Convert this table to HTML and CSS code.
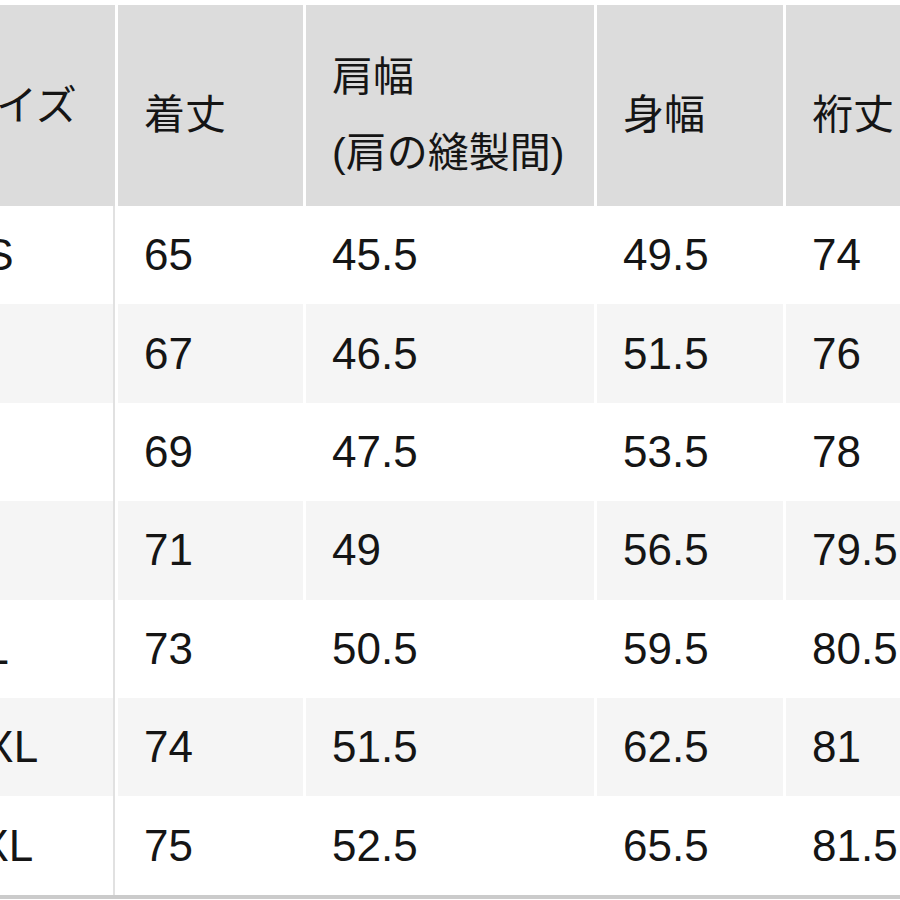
FILE: index.html
```html
<!DOCTYPE html>
<html lang="ja">
<head>
<meta charset="utf-8">
<title>サイズ表</title>
<link rel="stylesheet" href="styles.css">
</head>
<body>
<div class="table">
  <div class="row head">
    <div class="cell first"><span>サイズ</span></div>
    <div class="cell"><span>着丈</span></div>
    <div class="cell"><span>肩幅</span><span>(肩の縫製間)</span></div>
    <div class="cell"><span>身幅</span></div>
    <div class="cell"><span>裄丈</span></div>
  </div>
  <div class="rows">
    <div class="row body">
      <div class="cell first">XS</div><div class="cell">65</div><div class="cell">45.5</div><div class="cell">49.5</div><div class="cell">74</div>
    </div>
    <div class="row body alt">
      <div class="cell first">S</div><div class="cell">67</div><div class="cell">46.5</div><div class="cell">51.5</div><div class="cell">76</div>
    </div>
    <div class="row body">
      <div class="cell first">M</div><div class="cell">69</div><div class="cell">47.5</div><div class="cell">53.5</div><div class="cell">78</div>
    </div>
    <div class="row body alt">
      <div class="cell first">L</div><div class="cell">71</div><div class="cell">49</div><div class="cell">56.5</div><div class="cell">79.5</div>
    </div>
    <div class="row body">
      <div class="cell first">XL</div><div class="cell">73</div><div class="cell">50.5</div><div class="cell">59.5</div><div class="cell">80.5</div>
    </div>
    <div class="row body alt">
      <div class="cell first">XXL</div><div class="cell">74</div><div class="cell">51.5</div><div class="cell">62.5</div><div class="cell">81</div>
    </div>
    <div class="row body">
      <div class="cell first">3XL</div><div class="cell">75</div><div class="cell">52.5</div><div class="cell">65.5</div><div class="cell">81.5</div>
    </div>
  </div>
</div>
</body>
</html>
```

FILE: styles.css
```css
html, body {
  margin: 0;
  padding: 0;
  background: #ffffff;
  overflow: hidden;
}

body {
  font-family: "Liberation Sans", "Noto Sans CJK JP", sans-serif;
  color: #151515;
}

.table {
  margin-left: -71px;
  padding-top: 5px;
  width: 1040px;
}

.row {
  display: grid;
  grid-template-columns: 186px 185px 288px 186px 186px;
  column-gap: 3px;
}

.cell {
  box-sizing: border-box;
  padding-left: 26px;
  white-space: nowrap;
}

.head .cell {
  background: #dcdcdc;
  height: 201px;
  display: flex;
  flex-direction: column;
  justify-content: center;
  padding-top: 18px;
  font-size: 41px;
  line-height: 76px;
}

.head .cell.first {
  padding-top: 0;
}

.rows {
  border-bottom: 4px solid #cbcbcb;
}

.body .cell {
  height: 98.4px;
  display: flex;
  align-items: center;
  font-size: 44px;
  background: #ffffff;
}

.body.alt .cell {
  background: #f5f5f5;
}

.body .cell.first {
  border-right: 2px solid #e1e1e1;
}
```
